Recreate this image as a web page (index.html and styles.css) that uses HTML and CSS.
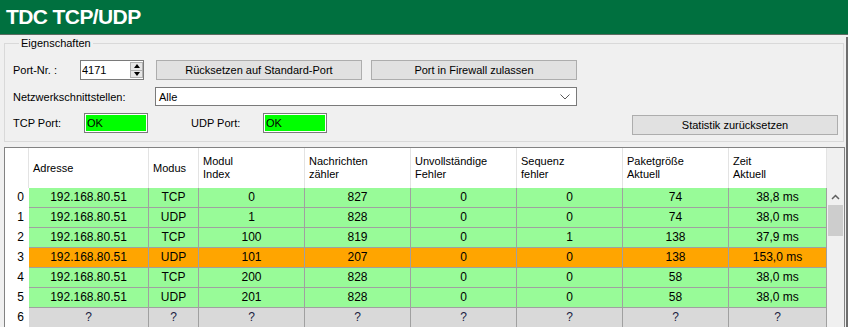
FILE: index.html
```html
<!DOCTYPE html>
<html lang="de">
<head>
  <meta charset="UTF-8">
  <meta name="viewport" content="width=device-width, initial-scale=1.0">
  <title>TDC TCP/UDP</title>
  <link rel="stylesheet" href="styles.css">
</head>
<body>
  <div class="titlebar">
    <h1>TDC TCP/UDP</h1>
  </div>
  <div class="main">
    <!-- Eigenschaften -->
    <fieldset class="group">
      <legend>Eigenschaften</legend>
      <div class="row row-port">
        <label class="lbl lbl-port" for="port">Port-Nr. :</label>
        <div class="spin">
          <input type="text" id="port" value="4171">
          <div class="spin-btns">
            <span class="spin-btn"><i class="tri-up"></i></span>
            <span class="spin-btn"><i class="tri-down"></i></span>
          </div>
        </div>
        <button class="btn btn-std">Rücksetzen auf Standard-Port</button>
        <button class="btn btn-fw">Port in Firewall zulassen</button>
      </div>
      <div class="row row-net">
        <label class="lbl lbl-net">Netzwerkschnittstellen:</label>
        <div class="combo">
          <span>Alle</span>
          <svg class="combo-arrow" width="10" height="6" viewBox="0 0 10 6"><polyline points="0.5,0.5 5,5 9.5,0.5" fill="none" stroke="#5a5a5a" stroke-width="1"/></svg>
        </div>
      </div>
      <div class="row row-status">
        <span class="lbl lbl-tcp">TCP Port:</span>
        <span class="status">OK</span>
        <span class="lbl lbl-udp">UDP Port:</span>
        <span class="status">OK</span>
        <button class="btn btn-stat">Statistik zurücksetzen</button>
      </div>
    </fieldset>

    <!-- Tabelle -->
    <div class="grid">
      <div class="grid-main">
        <div class="grid-row grid-head">
          <div class="head-cell"></div>
          <div class="head-cell">Adresse</div>
          <div class="head-cell">Modus</div>
          <div class="head-cell">Modul<br>Index</div>
          <div class="head-cell">Nachrichten<br>zähler</div>
          <div class="head-cell">Unvollständige<br>Fehler</div>
          <div class="head-cell">Sequenz<br>fehler</div>
          <div class="head-cell">Paketgröße<br>Aktuell</div>
          <div class="head-cell">Zeit<br>Aktuell</div>
        </div>
        <div class="grid-row ok">
          <div class="row-num">0</div><div class="cell">192.168.80.51</div><div class="cell">TCP</div><div class="cell">0</div><div class="cell">827</div><div class="cell">0</div><div class="cell">0</div><div class="cell">74</div><div class="cell">38,8 ms</div>
        </div>
        <div class="grid-row ok">
          <div class="row-num">1</div><div class="cell">192.168.80.51</div><div class="cell">UDP</div><div class="cell">1</div><div class="cell">828</div><div class="cell">0</div><div class="cell">0</div><div class="cell">74</div><div class="cell">38,0 ms</div>
        </div>
        <div class="grid-row ok">
          <div class="row-num">2</div><div class="cell">192.168.80.51</div><div class="cell">TCP</div><div class="cell">100</div><div class="cell">819</div><div class="cell">0</div><div class="cell">1</div><div class="cell">138</div><div class="cell">37,9 ms</div>
        </div>
        <div class="grid-row warn">
          <div class="row-num">3</div><div class="cell">192.168.80.51</div><div class="cell">UDP</div><div class="cell">101</div><div class="cell">207</div><div class="cell">0</div><div class="cell">0</div><div class="cell">138</div><div class="cell">153,0 ms</div>
        </div>
        <div class="grid-row ok">
          <div class="row-num">4</div><div class="cell">192.168.80.51</div><div class="cell">TCP</div><div class="cell">200</div><div class="cell">828</div><div class="cell">0</div><div class="cell">0</div><div class="cell">58</div><div class="cell">38,0 ms</div>
        </div>
        <div class="grid-row ok">
          <div class="row-num">5</div><div class="cell">192.168.80.51</div><div class="cell">UDP</div><div class="cell">201</div><div class="cell">828</div><div class="cell">0</div><div class="cell">0</div><div class="cell">58</div><div class="cell">38,0 ms</div>
        </div>
        <div class="grid-row unknown">
          <div class="row-num">6</div><div class="cell">?</div><div class="cell">?</div><div class="cell">?</div><div class="cell">?</div><div class="cell">?</div><div class="cell">?</div><div class="cell">?</div><div class="cell">?</div>
        </div>
      </div>
      <div class="vscroll">
        <div class="vs-up">
          <svg width="9" height="6" viewBox="0 0 9 6"><polyline points="1,5 4.5,1.5 8,5" fill="none" stroke="#606060" stroke-width="1.5"/></svg>
        </div>
        <div class="vs-thumb"></div>
      </div>
    </div>
  </div>
</body>
</html>
```

FILE: styles.css
```css
* {
  box-sizing: border-box;
}
body {
  margin: 0;
  width: 848px;
  height: 327px;
  overflow: hidden;
  background-color: #f0f0f0;
  font-family: "Liberation Sans", Arial, sans-serif;
  font-size: 11px;
  color: #000;
}
.titlebar {
  height: 35px;
  background-color: #00703f;
  border-bottom: 1px solid #5c6b62;
}
.titlebar h1 {
  margin: 0;
  padding-left: 6px;
  line-height: 34px;
  font-size: 21px;
  font-weight: bold;
  letter-spacing: -0.6px;
  color: #fff;
}
.main {
  height: 292px;
  padding: 0 1px 0 4px;
  border-right: 2px solid #6e6e6e;
}
.group {
  margin: 2px 1px 0 0;
  padding: 0 5px 6px 8px;
  border: 1px solid #d9d9d9;
  min-width: 0;
}
.group legend {
  margin-left: 6px;
  padding: 0 2px;
  line-height: 13px;
}
.row {
  display: flex;
  align-items: center;
}
.row-port {
  margin-top: 10px;
  height: 20px;
}
.row-net {
  margin-top: 7px;
  height: 19px;
}
.row-status {
  margin-top: 7px;
  height: 22px;
  align-items: flex-start;
}
.lbl {
  white-space: nowrap;
}
.lbl-port {
  width: 67px;
}
.lbl-net {
  width: 142px;
}
.lbl-tcp {
  width: 71px;
  line-height: 20px;
}
.lbl-udp {
  width: 72px;
  margin-left: 43px;
  line-height: 20px;
}
.spin {
  display: flex;
  width: 64px;
  height: 20px;
  border: 1px solid #7a7a7a;
  background: #fff;
}
.spin input {
  width: 49px;
  border: none;
  padding: 0 0 0 1px;
  font-family: inherit;
  font-size: 11px;
  outline: none;
}
.spin-btns {
  display: flex;
  flex-direction: column;
  width: 13px;
  margin: 1px 0;
  border: 1px solid #b0b0b0;
}
.spin-btn {
  flex: 1;
  display: flex;
  align-items: center;
  justify-content: center;
  background: #e6e6e6;
}
.spin-btn + .spin-btn {
  border-top: 1px solid #b0b0b0;
}
.tri-up {
  border-left: 3px solid transparent;
  border-right: 3px solid transparent;
  border-bottom: 4px solid #000;
}
.tri-down {
  border-left: 3px solid transparent;
  border-right: 3px solid transparent;
  border-top: 4px solid #000;
}
.btn {
  width: 206px;
  height: 20px;
  padding: 0;
  background-color: #e1e1e1;
  border: 1px solid #adadad;
  font-family: inherit;
  font-size: 11px;
  color: #000;
}
.btn-std {
  margin-left: 12px;
}
.btn-fw {
  margin-left: 9px;
}
.btn-stat {
  margin-left: auto;
  margin-top: 2px;
}
.combo {
  display: flex;
  align-items: center;
  justify-content: space-between;
  width: 422px;
  height: 19px;
  padding: 0 4px 0 3px;
  background: #fff;
  border: 1px solid #7a7a7a;
}
.combo-arrow {
  margin-right: 2px;
}
.status {
  width: 64px;
  height: 20px;
  padding-left: 2px;
  line-height: 18px;
  background-color: #00ff00;
  border: 1px solid #7a7a7a;
  box-shadow: inset 0 0 0 1px #fff;
}
.grid {
  display: flex;
  margin-top: 5px;
  border: 1px solid #828282;
  background-color: #f0f0f0;
}
.grid-main {
  width: 822px;
}
.grid-row {
  display: grid;
  grid-template-columns: 24px 120px 50px 106px 106px 106px 106px 106px 98px;
  height: 20px;
  font-size: 12px;
}
.grid-head {
  height: 40px;
  background-color: #fff;
  font-size: 11px;
}
.head-cell {
  display: flex;
  align-items: center;
  padding-left: 4px;
  line-height: 13px;
  border-right: 1px solid #e3e3e3;
}
.row-num {
  background-color: #fff;
  text-align: right;
  padding-right: 5px;
  line-height: 19px;
}
.cell {
  text-align: center;
  line-height: 19px;
  border-right: 1px solid #a0a0a0;
  border-bottom: 1px solid #a0a0a0;
}
.ok .cell {
  background-color: #98fb98;
}
.warn .cell {
  background-color: #ffa500;
}
.unknown .cell {
  background-color: #d9d9d9;
  color: #1c1c40;
}
.vscroll {
  width: 17px;
  margin-top: 40px;
}
.vs-up {
  height: 17px;
  display: flex;
  align-items: center;
  justify-content: center;
}
.vs-thumb {
  height: 31px;
  margin: 0 1px;
  background-color: #cdcdcd;
}
```
